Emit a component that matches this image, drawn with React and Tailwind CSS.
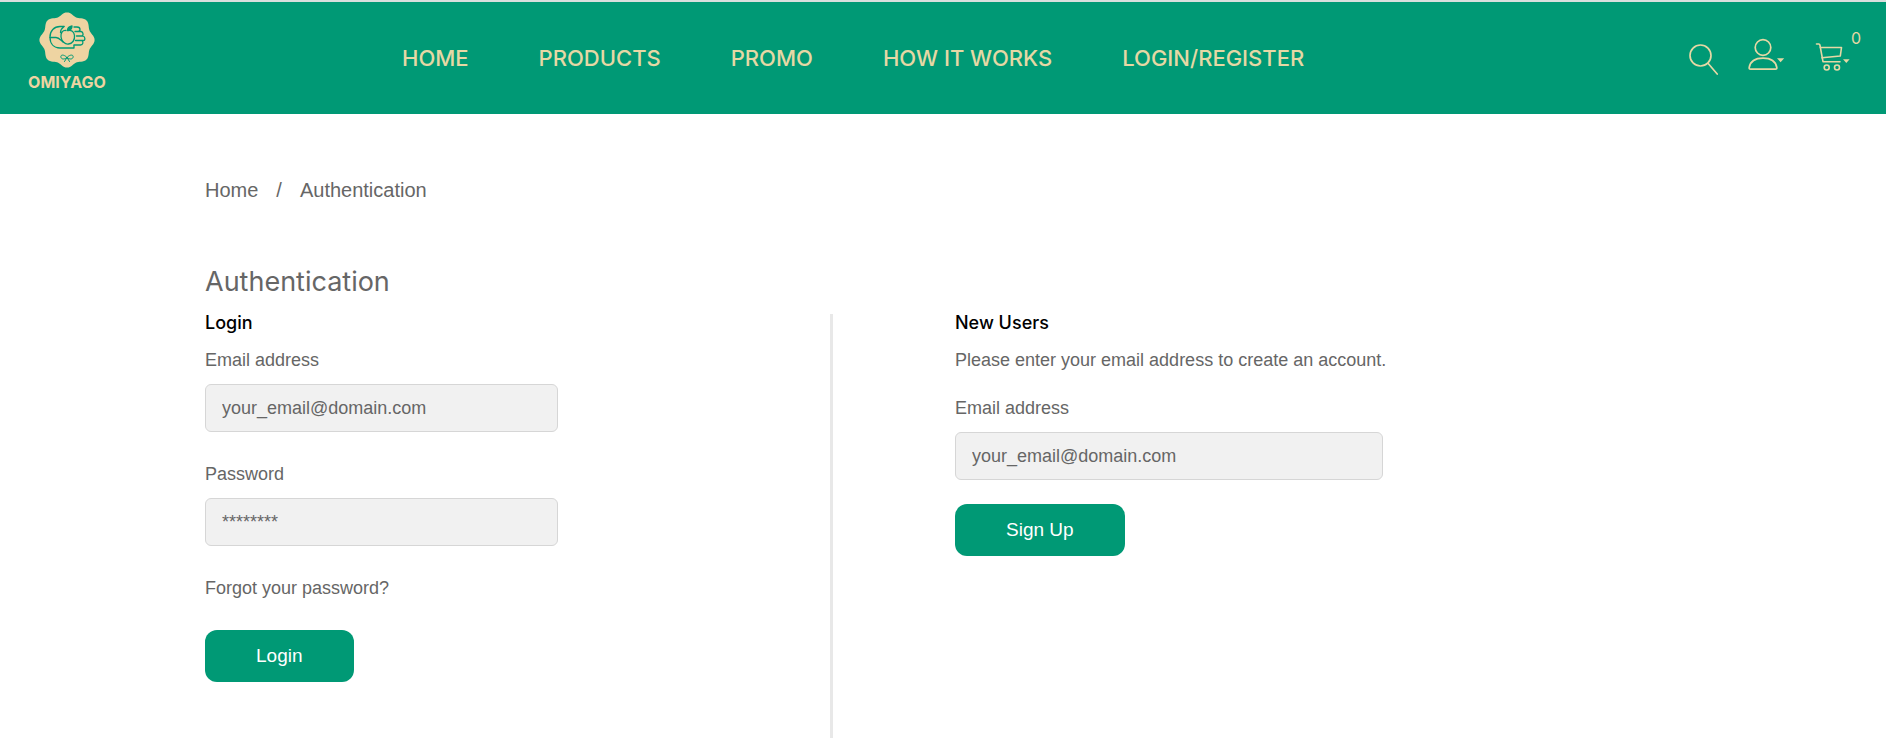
const geo = "font-['Inter',sans-serif]";

const links = ['HOME', 'PRODUCTS', 'PROMO', 'HOW IT WORKS', 'LOGIN/REGISTER'];

function badgePath() {
  const n = 120;
  let d = '';
  for (let i = 0; i < n; i++) {
    const t = (i / n) * Math.PI * 2;
    const r = 26 + 1.6 * Math.cos(8 * t);
    d += `${i ? 'L' : 'M'}${(28 + r * Math.sin(t)).toFixed(2)} ${(28 - r * Math.cos(t)).toFixed(2)}`;
  }
  return d + 'Z';
}

function Badge() {
  return (
    <svg viewBox="0 0 56 56" className="size-14" fill="none" stroke="#009975" strokeWidth="1.3" strokeLinecap="round" strokeLinejoin="round" aria-hidden="true">
      <path d={badgePath()} fill="#eed4a2" stroke="none" />
      <path d="M25 14.500H21C15 14.500 11 19 11 25C11 32 15 36 21 36H35V33.500" />
      <path d="M11 25.500H17C20 25.500 21.500 28 24 30" />
      <path d="M25 14.500C22.500 16.500 21.500 18.500 21.500 20.500M27 18.500C23.500 18 21.500 21 22 25C22.500 29 26 32.500 29.500 32C33.500 31.500 36 28 35.500 23.500C35 19.500 32.500 18 29 18.500" />
      <path d="M28.500 18.500C28.500 16.500 30.500 14.500 33 14C33 16.500 31.500 18.500 28.500 18.500Z" fill="#009975" />
      <path d="M35 15H38C40 15 41 16 41 17.500C41 19 40 19.500 38.500 19.500H36M38.500 19.500H42C44.500 20 45 24 42 24H37.500M42 24H44C46.500 25 46.500 28.500 44 28.500H36.500M42.500 28.500C45 29.500 44 33 41.500 33H35" />
      <path d="M28 45.500C25 42 21 42.500 22 45.500C23 48 26.500 47 28 45.500ZM28 45.500C31 42 35 42.500 34 45.500C33 48 29.500 47 28 45.500ZM28 45.500L25.500 49.500M28 45.500L30.500 49.500" strokeWidth="1" />
    </svg>
  );
}

function SearchIcon() {
  return (
    <svg width="32" height="40" viewBox="0 0 32 40" fill="none" stroke="currentColor" strokeWidth="1.7" strokeLinecap="round" aria-hidden="true">
      <circle cx="12.500" cy="17.500" r="10.500" />
      <path d="M20.200 25.500L29.200 36" />
    </svg>
  );
}

function UserIcon() {
  return (
    <svg width="40" height="40" viewBox="0 0 40 40" fill="none" stroke="currentColor" strokeWidth="1.7" strokeLinejoin="round" aria-hidden="true">
      <circle cx="17" cy="9.500" r="7.800" />
      <path d="M4.500 31.200C3.400 31.200 3 30.500 3.200 29.500C4.300 23.500 9 20.200 17 20.200C25 20.200 29.700 23.500 30.800 29.500C31 30.500 30.600 31.200 29.500 31.200Z" />
      <path d="M31 20.200H38.200L34.600 24.200Z" fill="currentColor" stroke="none" />
    </svg>
  );
}

function CartIcon() {
  return (
    <svg width="37" height="40" viewBox="0 0 37 40" fill="none" stroke="currentColor" strokeWidth="1.6" strokeLinecap="round" strokeLinejoin="round" aria-hidden="true">
      <path d="M2.500 6H4.800Q5.700 6 5.900 7L9 23.700H26" />
      <path d="M6.400 9.500H27.500L26.300 18L8 19.800" />
      <circle cx="12.700" cy="29.500" r="2.500" />
      <circle cx="23" cy="29.500" r="2.500" />
      <path d="M29 21.300H35.600L32.300 25Z" fill="currentColor" stroke="none" />
    </svg>
  );
}

function Field({ id, label, type, placeholder, width }) {
  return (
    <div>
      <label htmlFor={id} className="block text-[18px] leading-6">{label}</label>
      <input
        id={id}
        type={type}
        placeholder={placeholder}
        className={`mt-3 block h-12 w-full ${width} rounded-md border border-[#d6d6d6] bg-[#f1f1f1] px-4 text-[18px] text-[#666] placeholder:text-[#666]`}
      />
    </div>
  );
}

function SubmitButton({ children }) {
  return (
    <button type="submit" className="h-[52px] rounded-xl bg-[#009975] px-[51px] text-[19px] leading-6 text-white">
      {children}
    </button>
  );
}

export default function App() {
  return (
    <div className="flex min-h-screen flex-col bg-white font-['Liberation_Sans',Arial,sans-serif] text-[#666]">
      <header className="flex h-[114px] items-start border-t-2 border-[#d9dfdd] bg-[#009975] pr-[25px] pl-[27px] text-[#e6d8a5]">
        <a href="#" className="mt-[10px] flex w-20 flex-col items-center text-[#eed4a2]">
          <Badge />
          <span className={`${geo} mt-0.5 text-[16px] leading-6 font-bold`}>OMIYAGO</span>
        </a>
        <nav aria-label="Main" className={`${geo} mt-[42px] ml-[295px] flex gap-[70px] text-[22px] leading-7 font-medium whitespace-nowrap`}>
          {links.map((l) => <a key={l} href="#">{l}</a>)}
        </nav>
        <div className="mt-9 ml-auto flex items-start gap-7">
          <button type="button" aria-label="Search" className="-mr-0.5"><SearchIcon /></button>
          <button type="button" aria-label="Account"><UserIcon /></button>
          <button type="button" aria-label="Cart" className="flex items-start">
            <CartIcon />
            <span className={`${geo} -mt-2 text-[16px] leading-4`}>0</span>
          </button>
        </div>
      </header>
      <main className="mx-auto flex w-full max-w-[1476px] grow flex-col">
        <nav aria-label="Breadcrumb" className="flex gap-[18px] pt-16 text-[20px] leading-6">
          <a href="#">Home</a><span>/</span><span>Authentication</span>
        </nav>
        <h1 className={`${geo} mt-16 text-[27px] leading-8`}>Authentication</h1>
        <div className="mt-4 grid grow grid-cols-[628fr_848fr]">
          <section className="border-r-3 border-[#e8e8e8] pb-14">
            <form>
              <h2 className={`${geo} text-[18px] leading-[18px] font-medium text-black`}>Login</h2>
              <div className="mt-4 flex flex-col gap-[30px]">
                <Field id="login-email" label="Email address" type="email" placeholder="your_email@domain.com" width="max-w-[353px]" />
                <Field id="login-password" label="Password" type="password" placeholder="********" width="max-w-[353px]" />
                <a href="#" className="text-[18px] leading-6">Forgot your password?</a>
              </div>
              <div className="mt-[30px]"><SubmitButton>Login</SubmitButton></div>
            </form>
          </section>
          <section className="pl-[122px]">
            <form>
              <h2 className={`${geo} text-[18px] leading-[18px] font-medium text-black`}>New Users</h2>
              <p className="mt-4 mb-6 text-[18px] leading-6">Please enter your email address to create an account.</p>
              <Field id="signup-email" label="Email address" type="email" placeholder="your_email@domain.com" width="max-w-[428px]" />
              <div className="mt-6"><SubmitButton>Sign Up</SubmitButton></div>
            </form>
          </section>
        </div>
      </main>
    </div>
  );
}
